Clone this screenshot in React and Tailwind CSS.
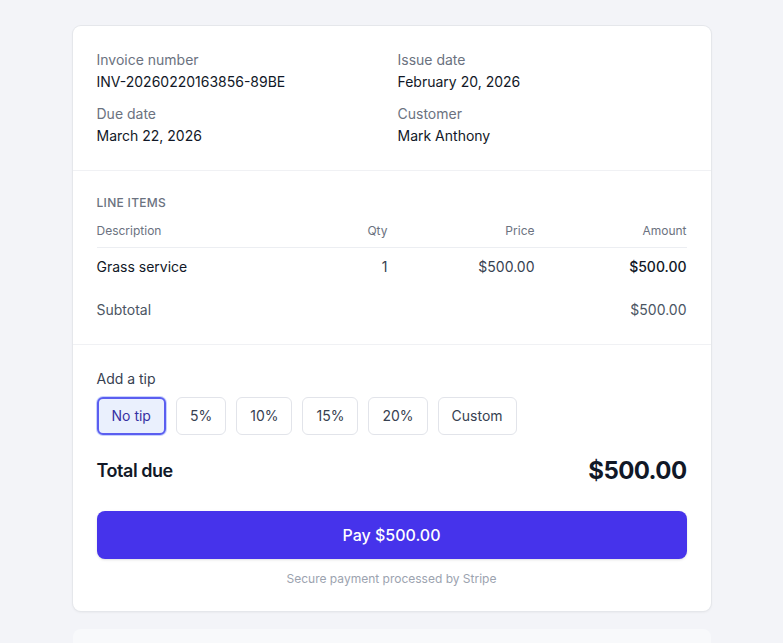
import { useState } from 'react'

const tips = ['No tip', '5%', '10%', '15%', '20%', 'Custom']

function Field({ label, value }) {
  return (
    <div>
      <p className="text-sm leading-5 text-[#6b7280]">{label}</p>
      <p className="mt-0.5 text-sm leading-5 text-[#111827]">{value}</p>
    </div>
  )
}

export default function App() {
  const [tip, setTip] = useState('No tip')

  return (
    <div
      className="min-h-screen bg-[#f3f4f8] pt-[26px] pb-10"
      style={{ fontFamily: 'Inter, "Noto Sans", sans-serif' }}
    >
      <div className="mx-auto w-[638px] rounded-lg bg-white shadow-[0_0_0_1px_#e5e7eb,0_1px_3px_rgba(0,0,0,0.08)]">
        {/* 請求書の概要 */}
        <div className="grid grid-cols-2 gap-x-3 gap-y-3 border-b border-[#f0f1f4] p-6">
          <Field label="Invoice number" value="INV-20260220163856-89BE" />
          <Field label="Issue date" value="February 20, 2026" />
          <Field label="Due date" value="March 22, 2026" />
          <Field label="Customer" value="Mark Anthony" />
        </div>

        {/* 明細 */}
        <div className="border-b border-[#f0f1f4] p-6">
          <p className="text-xs leading-4 font-medium tracking-wide text-[#6b7280] uppercase">Line items</p>
          <div className="mt-3 grid grid-cols-[211px_80px_147px_152px] border-b border-[#eceef2] pb-2 text-xs leading-4 text-[#6b7280]">
            <span>Description</span>
            <span className="text-right">Qty</span>
            <span className="text-right">Price</span>
            <span className="text-right">Amount</span>
          </div>
          <div className="grid grid-cols-[211px_80px_147px_152px] pt-[9px] pb-[11px] text-sm leading-5 text-[#111827]">
            <span>Grass service</span>
            <span className="text-right text-[#374151]">1</span>
            <span className="text-right text-[#374151]">$500.00</span>
            <span className="text-right font-medium">$500.00</span>
          </div>
          <div className="mt-3 flex justify-between text-sm leading-5 text-[#4b5563]">
            <span>Subtotal</span>
            <span>$500.00</span>
          </div>
        </div>

        {/* チップと支払い */}
        <div className="p-6">
          <p className="text-sm leading-5 text-[#374151]">Add a tip</p>
          <div className="mt-2 flex gap-2.5">
            {tips.map(t => (
              <button
                key={t}
                onClick={() => setTip(t)}
                className={
                  tip === t
                    ? 'h-[38px] rounded-md border-2 border-[#5b5ef0] bg-[#eaf0fd] px-[13px] text-sm text-[#3730a3] shadow-[0_0_0_1px_#c7d2fe]'
                    : 'h-[38px] rounded-md border border-[#e2e4ea] bg-white px-[13px] text-sm text-[#374151]'
                }
              >
                {t}
              </button>
            ))}
          </div>

          <div className="mt-5 flex items-center justify-between">
            <span className="text-lg font-semibold tracking-tight text-[#111827]">Total due</span>
            <span className="text-2xl leading-8 font-bold tracking-tight text-[#111827]">$500.00</span>
          </div>

          <button className="mt-6 h-12 w-full rounded-lg bg-[#4633eb] text-base font-medium text-white shadow-sm">
            Pay $500.00
          </button>
          <p className="mt-3 text-center text-xs leading-4 text-[#9ca3af]">Secure payment processed by Stripe</p>
        </div>
      </div>

      <div className="mx-auto mt-[18px] h-24 w-[638px] rounded-lg bg-[#f8f9fb]" />
    </div>
  )
}
